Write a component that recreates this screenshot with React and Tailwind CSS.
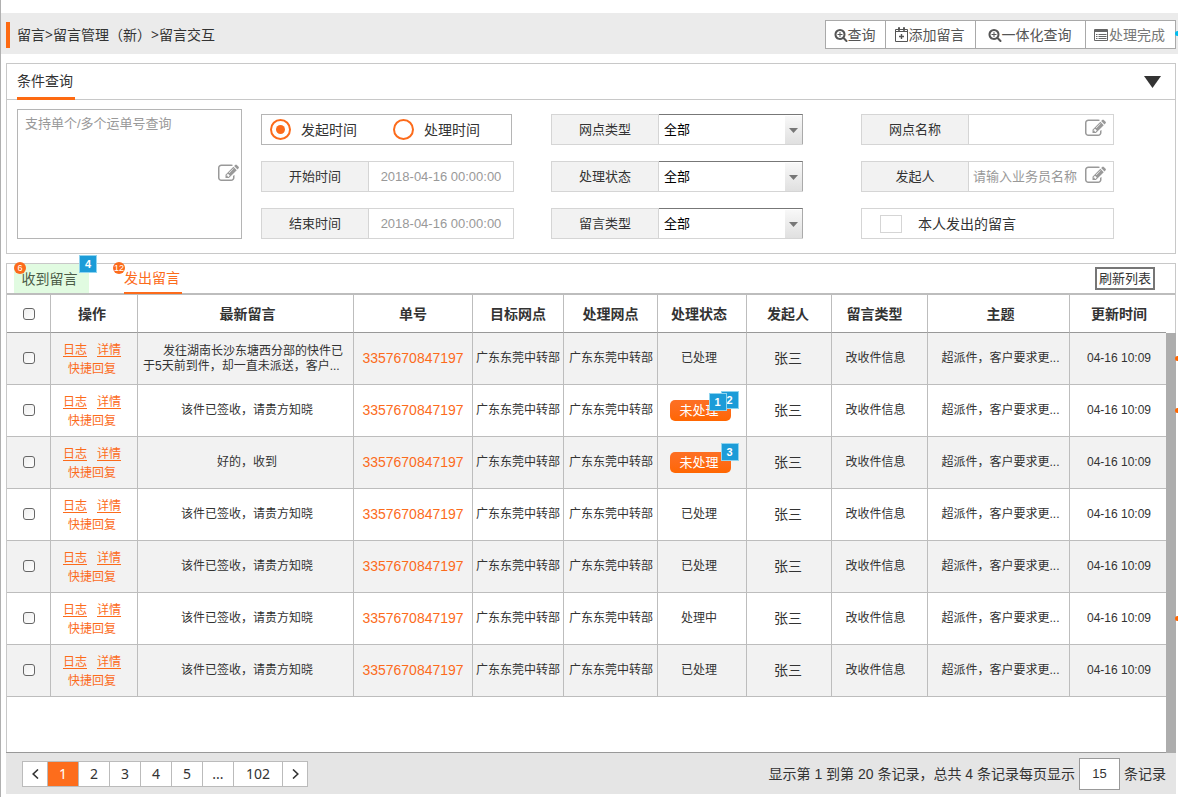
const columns = [
  { name: "操作", width: "w-[87px]", pad: "pr-1" },
  { name: "最新留言", width: "w-[216px]", pad: "pl-1" },
  { name: "单号", width: "w-[119px]", pad: "" },
  { name: "目标网点", width: "w-[91px]", pad: "" },
  { name: "处理网点", width: "w-[94px]", pad: "" },
  { name: "处理状态", width: "w-[89px]", pad: "pr-[6px]" },
  { name: "发起人", width: "w-[85px]", pad: "pr-[2px]" },
  { name: "留言类型", width: "w-[96px]", pad: "pr-[10px]" },
  { name: "主题", width: "w-[142px]", pad: "pl-1" },
  { name: "更新时间", width: "w-[96px]", pad: "pl-[2px]" },
];

const rows = [
  { text: null, status: "已处理", badges: [], dot: true },
  { text: "该件已签收，请贵方知晓", status: "未处理", badges: ["2", "1"], dot: true },
  { text: "好的，收到", status: "未处理", badges: ["3"], dot: false },
  { text: "该件已签收，请贵方知晓", status: "已处理", badges: [], dot: false },
  { text: "该件已签收，请贵方知晓", status: "已处理", badges: [], dot: false },
  { text: "该件已签收，请贵方知晓", status: "处理中", badges: [], dot: true },
  { text: "该件已签收，请贵方知晓", status: "已处理", badges: [], dot: false },
];

function EditIcon({ className }) {
  return (
    <svg viewBox="0 0 1792 1792" aria-hidden="true" className={`h-[21px] w-[21px] fill-[#999] ${className}`}>
      <path d="M888 1184l116-116-152-152-116 116v56h96v96h56zm440-720q-16-16-33 1l-350 350q-17 17-1 33t33-1l350-350q17-17 1-33zm80 594v190q0 119-84.500 203.500t-203.500 84.500h-832q-119 0-203.500-84.500t-84.500-203.500v-832q0-119 84.500-203.500t203.500-84.500h832q63 0 117 25 15 7 18 23 3 17-9 29l-49 49q-14 14-32 8-23-6-45-6h-832q-66 0-113 47t-47 113v832q0 66 47 113t113 47h832q66 0 113-47t47-113v-126q0-13 9-22l64-64q15-15 35-7t20 29zm-96-738l288 288-672 672h-288v-288zm444 132l-92 92-288-288 92-92q28-28 68-28t68 28l152 152q28 28 28 68t-28 68z" />
    </svg>
  );
}

function SearchPlusIcon() {
  return (
    <svg viewBox="0 0 1792 1792" aria-hidden="true" className="h-[14px] w-[14px] fill-[#555]">
      <path d="M1088 800v64q0 13-9.500 22.500t-22.500 9.500h-224v224q0 13-9.500 22.500t-22.500 9.500h-64q-13 0-22.500-9.500t-9.500-22.500v-224h-224q-13 0-22.500-9.500t-9.500-22.500v-64q0-13 9.500-22.500t22.500-9.500h224v-224q0-13 9.500-22.500t22.500-9.500h64q13 0 22.500 9.500t9.500 22.500v224h224q13 0 22.500 9.500t9.500 22.500zm128 32q0-185-131.500-316.500t-316.500-131.500-316.500 131.500-131.500 316.500 131.500 316.500 316.500 131.500 316.500-131.500 131.500-316.500zm512 832q0 53-37.500 90.500t-90.500 37.500q-54 0-90-38l-343-342q-179 124-399 124-143 0-273.500-55.500t-225-150-150-225-55.500-273.500 55.500-273.500 150-225 225-150 273.500-55.500 273.500 55.500 225 150 150 225 55.500 273.500q0 220-124 399l343 343q37 37 37 90z" />
    </svg>
  );
}

function CalendarPlusIcon() {
  return (
    <svg viewBox="0 0 14 15" aria-hidden="true" className="h-[15px] w-[14px] fill-none stroke-[#555]">
      <path d="M.5 2.500h12v12h-12zM.5 4.500h12" />
      <path d="M3.500.5h1v3h-1zM8.500.5h1v3h-1z" className="fill-white" />
      <path d="M6.500 7v5M4 9.500h5" className="stroke-[1.4]" />
    </svg>
  );
}

function ListIcon() {
  return (
    <svg viewBox="0 0 15 12" aria-hidden="true" className="h-3 w-[15px] fill-none stroke-[#666]">
      <path d="M.5 .5h13v11h-13zM.5 1.500h13M.5 2.500h13" />
      <path d="M2 5.500h1.500M4.500 5.500h8M2 7.500h1.500M4.500 7.500h8M2 9.500h1.500M4.500 9.500h8" />
    </svg>
  );
}

function NoteBadge({ children, place }) {
  return (
    <span className={`absolute flex h-[18px] w-[18px] items-center justify-center border border-[#8fd4ef] bg-[#1c9cd8] text-[11px] leading-none font-bold text-white ${place}`}>
      {children}
    </span>
  );
}

function CountBadge({ children }) {
  return (
    <span className="absolute -top-[2px] flex h-3 w-3 items-center justify-center rounded-full bg-[#fc6b1b] text-[9px] leading-none text-white first:left-0 last:-left-[11px]">
      {children}
    </span>
  );
}

function Tool({ icon, width, muted, children }) {
  return (
    <button
      type="button"
      className={`-ml-px flex h-[29px] items-center justify-center border border-[#a9a9a9] bg-white pr-[2px] text-sm ${width} ${muted ? "text-[#777]" : "text-[#555]"}`}
    >
      {icon}
      {children}
    </button>
  );
}

function Label({ htmlFor, children }) {
  return (
    <label htmlFor={htmlFor} className="flex w-[107px] shrink-0 items-center justify-center border-r border-[#d5d5d5] bg-[#f2f2f2] text-[13px] text-[#333]">
      {children}
    </label>
  );
}

function TextField({ id, label, value, placeholder, icon, center }) {
  return (
    <div className="flex h-[31px] border border-[#d5d5d5]">
      <Label htmlFor={id}>{label}</Label>
      <input
        id={id}
        type="text"
        defaultValue={value}
        placeholder={placeholder}
        className={`min-w-0 flex-1 bg-white text-[13px] text-[#999] outline-none placeholder:text-[#999] ${center ? "text-center" : "pl-1"}`}
      />
      {icon && <EditIcon className="mt-[3px] mr-[7px] shrink-0" />}
    </div>
  );
}

function SelectField({ id, label }) {
  return (
    <div className="flex h-[31px] border-b border-l border-[#d5d5d5]">
      <div className="flex border-t border-[#d5d5d5]">
        <Label htmlFor={id}>{label}</Label>
      </div>
      <div className="relative flex-1">
        <select id={id} className="h-full w-full appearance-none border-t border-r border-[#777] border-r-[#aaa] bg-white pl-[5px] text-[13px] text-black outline-none">
          <option>全部</option>
        </select>
        <span className="pointer-events-none absolute top-[2px] right-px bottom-0 flex w-[17px] items-center justify-center bg-linear-to-b from-[#f8f8f8] to-[#e0e0e0]">
          <svg viewBox="0 0 9 5" className="h-[5px] w-[9px] fill-[#777]">
            <path d="M0 0h9L4.500 5z" />
          </svg>
        </span>
      </div>
    </div>
  );
}

function TimeRadio({ label, defaultChecked }) {
  return (
    <label className="flex items-center gap-[10px] text-sm text-[#333]">
      <input
        type="radio"
        name="time-kind"
        defaultChecked={defaultChecked}
        className="h-[21px] w-[21px] appearance-none rounded-full border-2 border-[#fc6b1b] bg-white bg-clip-content p-1 checked:bg-[#fc6b1b]"
      />
      {label}
    </label>
  );
}

function Tick({ label }) {
  return (
    <input
      type="checkbox"
      aria-label={label}
      className="mx-auto block h-3 w-3 appearance-none rounded-[3px] border border-[#666] bg-linear-to-br from-[#eee] to-white checked:bg-[#fc6b1b]"
    />
  );
}

function PageButton({ width, active, label, children }) {
  return (
    <button
      type="button"
      aria-label={label}
      className={`-ml-px flex h-[26px] items-center justify-center border border-[#bbb] font-['Noto_Sans',sans-serif] text-sm ${width} ${active ? "bg-[#fd6d1c] text-white" : "bg-white text-[#333]"}`}
    >
      {children}
    </button>
  );
}

function Row({ row, index }) {
  const cell = "h-[52px] border-r border-b border-[#bdbdbd] p-0 pb-[2px]";
  return (
    <tr className="odd:bg-[#f2f2f2]">
      <td className={cell}>
        <Tick label={`选择第 ${index + 1} 行`} />
      </td>
      <td className={`${cell} pt-[5px] pr-1 leading-[19px] text-[#fc6b1b]`}>
        <div className="flex justify-center gap-[10px]">
          <a href="#log" className="underline underline-offset-2">日志</a>
          <a href="#detail" className="underline underline-offset-2">详情</a>
        </div>
        <a href="#reply">快捷回复</a>
      </td>
      <td className={`${cell} pl-[3px]`}>
        {row.text ?? (
          <p className="pt-[2px] pl-[2px] text-left indent-5 leading-[15px] whitespace-nowrap">
            发往湖南长沙东塘西分部的快件已
            <br />
            于5天前到件，却一直未派送，客户...
          </p>
        )}
      </td>
      <td className={`${cell} text-sm text-[#fc6b1b]`}>3357670847197</td>
      <td className={`${cell} whitespace-nowrap`}>广东东莞中转部</td>
      <td className={`${cell} pl-px whitespace-nowrap`}>广东东莞中转部</td>
      <td className={row.badges.length > 0 ? `${cell} pt-[2px] pr-1` : `${cell} pr-[6px]`}>
        {row.badges.length > 0 ? (
          <span className="relative mx-auto flex h-[21px] w-[61px] items-center justify-center rounded-[5px] bg-linear-to-b from-[#fd7024] to-[#ff6600] pr-[2px] text-[13px] text-white">
            {row.status}
            {row.badges.map((n) => (
              <NoteBadge key={n} place={n === "1" ? "-top-[7px] right-1" : "-top-[9px] -right-2"}>
                {n}
              </NoteBadge>
            ))}
          </span>
        ) : (
          row.status
        )}
      </td>
      <td className={`${cell} pr-[2px] text-sm`}>张三</td>
      <td className={`${cell} pr-2`}>改收件信息</td>
      <td className={`${cell} pl-1`}>超派件，客户要求更...</td>
      <td className="relative h-[52px] border-b border-[#bdbdbd] p-0 pb-[2px] pl-[2px]">
        04-16 10:09
        {row.dot && <span className="absolute top-[23px] -right-[14px] h-[5px] w-[5px] rounded-full bg-[#ff6600]" />}
      </td>
    </tr>
  );
}

export default function App() {
  return (
    <div className="min-h-screen overflow-x-hidden border-l border-[#b0b0b0] bg-white pt-[13px] font-['Liberation_Sans','Noto_Sans_CJK_SC',sans-serif] text-xs text-[#333]" lang="zh-CN">
      <header className="relative flex h-[41px] items-center bg-[#ebebeb] pt-[2px] pr-[2px] pl-[5px]">
        <span className="h-[26px] w-1 bg-[#fd6a12]" />
        <h1 className="ml-[7px] font-['Noto_Sans','Noto_Sans_CJK_SC',sans-serif] text-sm">留言&gt;留言管理（新）&gt;留言交互</h1>
        <div className="ml-auto flex">
          <Tool width="w-[61px]" icon={<SearchPlusIcon />}>查询</Tool>
          <Tool width="w-[91px]" icon={<CalendarPlusIcon />}>添加留言</Tool>
          <Tool width="w-[111px]" icon={<SearchPlusIcon />}>一体化查询</Tool>
          <Tool width="w-[91px]" muted icon={<ListIcon />}>处理完成</Tool>
        </div>
        <span className="absolute top-[18px] -right-[2px] h-[5px] w-[5px] rounded-full bg-[#00bdf0]" />
      </header>

      <section className="mt-[9px] mr-[2px] ml-[5px] border border-[#c8c8c8] pb-[14px]">
        <div className="flex h-9 items-center border-b border-[#c8c8c8] pr-[14px] pl-[10px]">
          <h2 className="-mb-px flex h-9 w-[58px] items-center border-b-[3px] border-[#fd6a12] text-sm">条件查询</h2>
          <button type="button" aria-label="收起条件" className="ml-auto">
            <svg viewBox="0 0 17 12" className="h-3 w-[17px] fill-[#333]">
              <path d="M0 0h17L8.500 12z" />
            </svg>
          </button>
        </div>
        <form className="flex px-[10px] pt-[9px]">
          <div className="relative h-[130px] w-[225px] shrink-0">
            <textarea
              aria-label="运单号"
              placeholder="支持单个/多个运单号查询"
              className="block h-full w-full resize-none border border-[#b5b5b5] px-[7px] py-[5px] text-[13px] outline-none placeholder:text-[#999]"
            />
            <EditIcon className="pointer-events-none absolute top-[54px] right-[3px]" />
          </div>
          <div className="mt-[5px] ml-[19px] flex w-[253px] flex-col gap-4">
            <div className="mr-[2px] flex h-[31px] items-center gap-[36px] border border-[#b5b5b5] pl-2">
              <TimeRadio label="发起时间" defaultChecked />
              <TimeRadio label="处理时间" />
            </div>
            <TextField id="start" label="开始时间" value="2018-04-16 00:00:00" center />
            <TextField id="end" label="结束时间" value="2018-04-16 00:00:00" center />
          </div>
          <div className="mt-[5px] ml-[37px] flex w-[252px] flex-col gap-4">
            <SelectField id="site-type" label="网点类型" />
            <SelectField id="status" label="处理状态" />
            <SelectField id="note-type" label="留言类型" />
          </div>
          <div className="mt-[5px] ml-[58px] flex w-[253px] flex-col gap-4">
            <TextField id="site" label="网点名称" icon />
            <TextField id="author" label="发起人" placeholder="请输入业务员名称" icon />
            <label className="flex h-[31px] items-center gap-4 border border-[#d5d5d5] pl-[18px] text-sm">
              <input type="checkbox" className="h-[18px] w-[22px] appearance-none border border-[#d5d5d5] checked:bg-[#fc6b1b]" />
              本人发出的留言
            </label>
          </div>
        </form>
      </section>

      <section className="mt-[9px] mr-[2px] ml-[5px]">
        <div className="border border-b-0 border-[#c8c8c8]">
          <div className="flex h-[29px] pl-[7px]">
            <button type="button" className="relative w-[75px] bg-[#e1fbe1] pr-1 text-sm text-[#4c5c48]">
              <CountBadge>6</CountBadge>
              收到留言
              <NoteBadge place="-top-[9px] -right-2">4</NoteBadge>
            </button>
            <button type="button" className="relative z-10 -mb-px ml-[35px] w-[58px] border-b-2 border-[#fc6b1b] pr-[2px] text-sm text-[#fc6b1b]">
              发出留言
              <span className="absolute -top-[2px] -left-[11px] flex h-3 w-3 items-center justify-center rounded-full bg-[#fc6b1b] text-[9px] leading-none text-white">12</span>
            </button>
            <button type="button" className="mt-[3px] mr-5 ml-auto h-[23px] w-[60px] border-2 border-[#767676] text-[13px] leading-none whitespace-nowrap">
              刷新列表
            </button>
          </div>
          <div className="flex border-t-2 border-[#bdbdbd]">
            <div className="flex-1">
              <table className="w-full table-fixed border-separate border-spacing-0 text-center">
                <thead>
                  <tr>
                    <th className="h-[38px] w-[44px] border-r border-b border-r-[#bdbdbd] border-b-[#999] p-0">
                      <Tick label="全选" />
                    </th>
                    {columns.map((c) => (
                      <th key={c.name} className={`h-[38px] border-r border-b border-r-[#bdbdbd] border-b-[#999] p-0 text-sm font-bold last:border-r-0 ${c.width} ${c.pad}`}>
                        {c.name}
                      </th>
                    ))}
                  </tr>
                </thead>
                <tbody>
                  {rows.map((row, i) => (
                    <Row key={i} row={row} index={i} />
                  ))}
                </tbody>
              </table>
            </div>
            <div className="-mr-px mt-[38px] -mb-14 w-[10px] bg-[#adadad]" />
          </div>
          <div className="h-[55px]" />
        </div>
        <footer className="flex h-[42px] items-center border-t border-[#999] bg-[#e5e5e5] pr-[10px] pl-4">
          <nav aria-label="分页" className="flex pl-px">
            <PageButton width="w-[26px]" label="上一页">
              <svg viewBox="0 0 7 10" className="h-[10px] w-[7px] fill-none stroke-[#333] stroke-[1.6]"><path d="M6 .5 1.200 5 6 9.500" /></svg>
            </PageButton>
            <PageButton width="w-8" active>1</PageButton>
            {["2", "3", "4", "5", "..."].map((n) => (
              <PageButton key={n} width="w-8">{n}</PageButton>
            ))}
            <PageButton width="w-[50px]">102</PageButton>
            <PageButton width="w-[26px]" label="下一页">
              <svg viewBox="0 0 7 10" className="h-[10px] w-[7px] fill-none stroke-[#333] stroke-[1.6]"><path d="M1 .5 5.800 5 1 9.500" /></svg>
            </PageButton>
          </nav>
          <div className="ml-auto flex items-center text-sm">
            <label htmlFor="page-size">显示第 1 到第 20 条记录，总共 4 条记录每页显示</label>
            <input id="page-size" type="text" defaultValue="15" className="mx-1 h-8 w-[41px] border border-[#999] bg-white text-center text-[13px] outline-none" />
            <span>条记录</span>
          </div>
        </footer>
      </section>
    </div>
  );
}
